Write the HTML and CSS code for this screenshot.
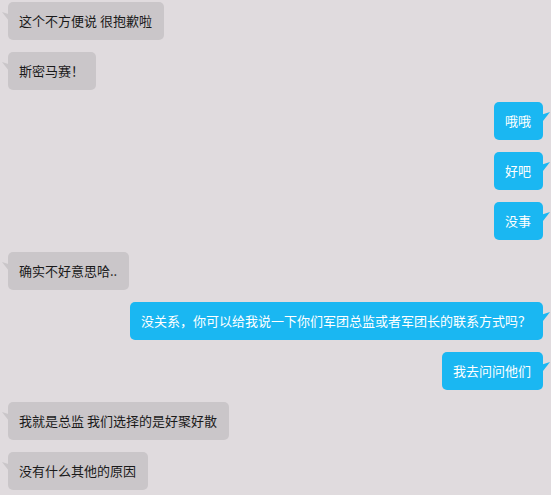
FILE: index.html
```html
<!DOCTYPE html>
<html lang="zh-CN">
<head>
<meta charset="utf-8">
<link rel="stylesheet" href="styles.css">
</head>
<body>
<div class="chat">
  <div class="row left"><div class="bubble">这个不方便说 很抱歉啦</div></div>
  <div class="row left"><div class="bubble">斯密马赛！</div></div>
  <div class="row right"><div class="bubble">哦哦</div></div>
  <div class="row right"><div class="bubble">好吧</div></div>
  <div class="row right"><div class="bubble">没事</div></div>
  <div class="row left"><div class="bubble">确实不好意思哈..</div></div>
  <div class="row right"><div class="bubble">没关系，你可以给我说一下你们军团总监或者军团长的联系方式吗？</div></div>
  <div class="row right"><div class="bubble">我去问问他们</div></div>
  <div class="row left"><div class="bubble">我就是总监 我们选择的是好聚好散</div></div>
  <div class="row left"><div class="bubble">没有什么其他的原因</div></div>
</div>
</body>
</html>
```
FILE: styles.css
```css
html, body {
  margin: 0;
  padding: 0;
  background: #e0dbde;
}
.chat {
  display: flex;
  flex-direction: column;
  gap: 12px;
  padding: 2px 8px;
  font-family: "Noto Sans CJK SC", "Liberation Sans", sans-serif;
  font-size: 13px;
}
.row {
  display: flex;
}
.row.right {
  justify-content: flex-end;
}
.bubble {
  position: relative;
  height: 38px;
  box-sizing: border-box;
  padding: 0 12px 0 11px;
  line-height: 38px;
  border-radius: 5px;
  white-space: nowrap;
}
.left .bubble {
  background: #cac6c9;
  color: #1a1a1a;
}
.right .bubble {
  background: #1ab7f2;
  color: #ffffff;
}
.bubble::before {
  content: "";
  position: absolute;
  top: 10px;
  width: 7px;
  height: 9px;
}
.left .bubble::before {
  left: -6px;
  background: #cac6c9;
  clip-path: polygon(0 0, 100% 25%, 100% 100%);
}
.right .bubble::before {
  right: -7px;
  background: #1ab7f2;
  clip-path: polygon(100% 0, 0 25%, 0 100%);
}
```
